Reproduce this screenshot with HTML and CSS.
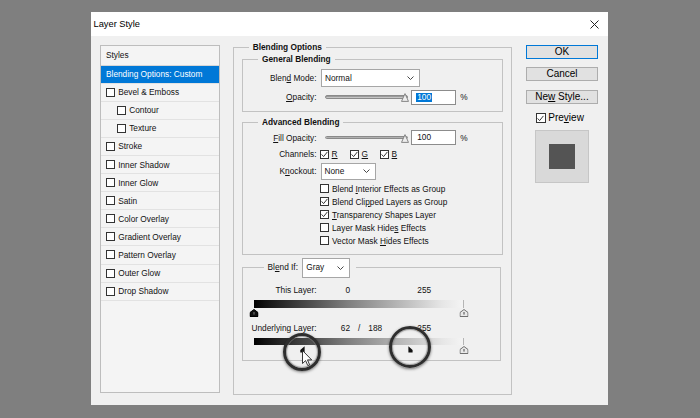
FILE: index.html
```html
<!DOCTYPE html>
<html>
<head>
<meta charset="utf-8">
<title>Layer Style</title>
<link rel="stylesheet" href="styles.css">
</head>
<body>
<div class="dialog">
  <div class="titlebar">
    <span class="title">Layer Style</span>
    <svg class="close" viewBox="0 0 9 9"><path d="M0.5 0.5L8.5 8.5M8.5 0.5L0.5 8.5" stroke="#222" stroke-width="1" fill="none"/></svg>
  </div>
  <div class="content">
    <div class="styles-panel">
      <div class="sp-header">Styles</div>
      <div class="sp-row sel">Blending Options: Custom</div>
      <div class="sp-row"><span class="cb"></span>Bevel &amp; Emboss</div>
      <div class="sp-row nested"><span class="cb"></span>Contour</div>
      <div class="sp-row nested"><span class="cb"></span>Texture</div>
      <div class="sp-row"><span class="cb"></span>Stroke</div>
      <div class="sp-row"><span class="cb"></span>Inner Shadow</div>
      <div class="sp-row"><span class="cb"></span>Inner Glow</div>
      <div class="sp-row"><span class="cb"></span>Satin</div>
      <div class="sp-row"><span class="cb"></span>Color Overlay</div>
      <div class="sp-row"><span class="cb"></span>Gradient Overlay</div>
      <div class="sp-row"><span class="cb"></span>Pattern Overlay</div>
      <div class="sp-row"><span class="cb"></span>Outer Glow</div>
      <div class="sp-row"><span class="cb"></span>Drop Shadow</div>
    </div>

    <fieldset class="grp main">
      <legend class="lg-main">Blending Options</legend>

      <fieldset class="grp sub">
        <legend>General Blending</legend>
        <div class="form">
          <span class="lbl">Blen<u>d</u> Mode:</span>
          <div class="select sel-mode"><span>Normal</span><svg class="chev" viewBox="0 0 7 4"><path d="M0.5 0.5L3.5 3.5L6.5 0.5" fill="none" stroke="#333" stroke-width="0.9"/></svg></div>
          <span class="lbl"><u>O</u>pacity:</span>
          <div class="slider-row">
            <div class="slider"><div class="track"></div><svg class="sthumb" viewBox="0 0 8 9"><path d="M4 0.6L7.5 8.4H0.5Z" fill="#ededed" stroke="#7a7a7a" stroke-width="0.9" stroke-linejoin="round"/></svg></div>
            <div class="num"><span class="hl">100</span></div>
            <span class="pct">%</span>
          </div>
        </div>
      </fieldset>

      <fieldset class="grp sub advanced">
        <legend>Advanced Blending</legend>
        <div class="form form-adv">
          <span class="lbl"><u>F</u>ill Opacity:</span>
          <div class="slider-row">
            <div class="slider"><div class="track"></div><svg class="sthumb" viewBox="0 0 8 9"><path d="M4 0.6L7.5 8.4H0.5Z" fill="#ededed" stroke="#7a7a7a" stroke-width="0.9" stroke-linejoin="round"/></svg></div>
            <div class="num"><span>100</span></div>
            <span class="pct">%</span>
          </div>
          <span class="lbl">Channels:</span>
          <div class="channels">
            <span class="ch"><span class="cb"><svg viewBox="0 0 7 7"><path d="M0.6 3.4L2.6 5.6L6.4 0.9" fill="none" stroke="#222" stroke-width="0.9"/></svg></span><u>R</u></span>
            <span class="ch"><span class="cb"><svg viewBox="0 0 7 7"><path d="M0.6 3.4L2.6 5.6L6.4 0.9" fill="none" stroke="#222" stroke-width="0.9"/></svg></span><u>G</u></span>
            <span class="ch"><span class="cb"><svg viewBox="0 0 7 7"><path d="M0.6 3.4L2.6 5.6L6.4 0.9" fill="none" stroke="#222" stroke-width="0.9"/></svg></span><u>B</u></span>
          </div>
          <span class="lbl">K<u>n</u>ockout:</span>
          <div class="select sel-ko"><span>None</span><svg class="chev" viewBox="0 0 7 4"><path d="M0.5 0.5L3.5 3.5L6.5 0.5" fill="none" stroke="#333" stroke-width="0.9"/></svg></div>
          <div class="checks">
            <div class="ck"><span class="cb"></span><span class="t">Blend <u>I</u>nterior Effects as Group</span></div>
            <div class="ck"><span class="cb"><svg viewBox="0 0 7 7"><path d="M0.6 3.4L2.6 5.6L6.4 0.9" fill="none" stroke="#222" stroke-width="0.9"/></svg></span><span class="t">Blend Cli<u>p</u>ped Layers as Group</span></div>
            <div class="ck"><span class="cb"><svg viewBox="0 0 7 7"><path d="M0.6 3.4L2.6 5.6L6.4 0.9" fill="none" stroke="#222" stroke-width="0.9"/></svg></span><span class="t"><u>T</u>ransparency Shapes Layer</span></div>
            <div class="ck"><span class="cb"></span><span class="t">Layer Mask Hide<u>s</u> Effects</span></div>
            <div class="ck"><span class="cb"></span><span class="t">Vector Mask <u>H</u>ides Effects</span></div>
          </div>
        </div>
      </fieldset>

      <fieldset class="grp blendif">
        <legend>
          <div class="bi-legend">
            <span>Bl<u>e</u>nd If:</span>
            <div class="select sel-if"><span>Gray</span><svg class="chev" viewBox="0 0 7 4"><path d="M0.5 0.5L3.5 3.5L6.5 0.5" fill="none" stroke="#333" stroke-width="0.9"/></svg></div>
          </div>
        </legend>
        <div class="bi-body">
          <div class="vals"><span class="l">This Layer:</span><span class="v1">0</span><span class="sl"></span><span class="v2"></span><span>255</span></div>
          <div class="gtrack first">
            <div class="gbar"></div>
            <div class="thumbs">
              <svg class="gthumb" style="left:0%" viewBox="0 0 9 8"><path d="M4.5 0.5L8.5 3.5V7.5H0.5V3.5Z" fill="#111" stroke="#000" stroke-linejoin="round"/><path d="M4.5 3v2.6" stroke="#888" stroke-width="0.9"/></svg>
              <svg class="gthumb" style="left:100%" viewBox="0 0 9 8"><path d="M4.5 0.5L8.5 3.5V7.5H0.5V3.5Z" fill="#e9e9e9" stroke="#707070" stroke-linejoin="round"/><path d="M4.5 3v2.6" stroke="#333" stroke-width="0.9"/></svg>
            </div>
          </div>
          <div class="vals second"><span class="l">Underlying Layer:</span><span class="v1">62</span><span class="sl">/</span><span class="v2">188</span><span>255</span></div>
          <div class="gtrack second">
            <div class="gbar bar2"></div>
            <div class="thumbs">
              <svg class="gthumb" style="left:100%" viewBox="0 0 9 8"><path d="M4.5 0.5L8.5 3.5V7.5H0.5V3.5Z" fill="#e9e9e9" stroke="#707070" stroke-linejoin="round"/><path d="M4.5 3v2.6" stroke="#333" stroke-width="0.9"/></svg>
            </div>
            <svg class="split split1" viewBox="0 0 5 7"><path d="M4.6 0.3V6.6H0.3V4Z" fill="#111"/></svg>
            <svg class="split split2" viewBox="0 0 5 7"><path d="M0.4 0.3V6.6H4.6V4Z" fill="#111"/></svg>
            <div class="ring ring1"></div>
            <div class="ring ring2"></div>
            <svg class="cursor" viewBox="0 0 11 17"><path d="M0.5 0.5V13.5L3.6 10.6L5.8 15.6L7.6 14.8L5.5 9.9H9.7Z" fill="#fff" stroke="#222" stroke-width="0.9" stroke-linejoin="round"/></svg>
          </div>
        </div>
      </fieldset>
    </fieldset>

    <div class="right">
      <div class="btn ok"><span>OK</span></div>
      <div class="btn"><span>Cancel</span></div>
      <div class="btn"><span>Ne<u>w</u> Style...</span></div>
      <div class="preview"><span class="cb"><svg viewBox="0 0 7 7"><path d="M0.6 3.4L2.6 5.6L6.4 0.9" fill="none" stroke="#222" stroke-width="0.9"/></svg></span><span class="t">Pre<u>v</u>iew</span></div>
      <div class="swatch"><div class="swatch-inner"></div></div>
    </div>
  </div>
</div>
</body>
</html>
```
FILE: styles.css
```css
* { box-sizing: border-box; }
html, body { margin: 0; }
body {
  width: 700px;
  height: 418px;
  overflow: hidden;
  background: #7f7f7f;
  padding: 12px 0 0 91px;
  font-family: "Liberation Sans", Arial, sans-serif;
  font-size: 8.3px;
  line-height: 10px;
  color: #111;
}
u { text-underline-offset: 1px; }
.t { white-space: nowrap; }

.dialog {
  width: 517px;
  height: 393px;
  background: #f0f0f0;
  display: flex;
  flex-direction: column;
}
.titlebar {
  height: 24px;
  flex: none;
  background: #fff;
  display: flex;
  align-items: center;
  justify-content: space-between;
  padding: 0 9px 0 2.5px;
}
.title { font-size: 9.3px; color: #000; }
.close { width: 9px; height: 9px; display: block; }

.content {
  flex: 1;
  display: flex;
  align-items: flex-start;
  padding: 8.5px 0 0 9px;
}

/* styles list */
.styles-panel {
  width: 120px;
  height: 348px;
  flex: none;
  border: 1px solid #bdbdbd;
  background: #f4f4f4;
}
.sp-header {
  height: 20px;
  border-bottom: 1px solid #d6d6d6;
  padding-left: 5px;
  display: flex;
  align-items: center;
}
.sp-row {
  height: 18.1px;
  border-bottom: 1px solid #e2e2e2;
  display: flex;
  align-items: center;
  padding-left: 4.5px;
  gap: 3.7px;
  white-space: nowrap;
}
.sp-row.sel { background: #0078d7; color: #fff; padding-left: 5px; }
.sp-row.nested { padding-left: 15.5px; }

.cb {
  width: 9px;
  height: 9px;
  border: 1px solid #333;
  background: #fff;
  flex: none;
  display: flex;
  align-items: center;
  justify-content: center;
}
.cb svg { display: block; width: 7px; height: 7px; }

/* group boxes */
.grp {
  margin: 0;
  padding: 0;
  border: 1px solid #c2c2c2;
  min-width: 0;
}
.grp > legend {
  padding: 0 4px;
  line-height: 11px;
  font-weight: bold;
}
.main {
  width: 279px;
  height: 353.5px;
  margin: -3px 0 0 13px;
  padding: 0 8px;
  flex: none;
}
.main > legend.lg-main { margin-left: 6.7px; }
.sub { margin-top: 1px; }
.sub > legend { margin-left: 15px; }
.advanced { margin-top: 5px; }

.form {
  display: grid;
  grid-template-columns: 73.5px auto;
  column-gap: 4.5px;
  row-gap: 3px;
  align-items: center;
  justify-items: start;
  padding: 4px 0 6px;
}
.form-adv { row-gap: 2.5px; padding: 2.5px 0 6.5px; }
.lbl { justify-self: end; white-space: nowrap; }

.select {
  display: flex;
  align-items: center;
  justify-content: space-between;
  background: #fff;
  border: 1px solid #a6a6a6;
  padding: 0 4.5px 0 3px;
}
.sel-mode { width: 98.5px; height: 18px; }
.sel-ko { width: 55px; height: 16.5px; margin-left: -0.5px; }
.sel-if { width: 48px; height: 20px; padding-left: 3px; padding-right: 5px; }
.chev { width: 7px; height: 4px; display: block; }

.slider-row { display: flex; align-items: center; height: 15px; }
.slider {
  position: relative;
  width: 86.5px;
  height: 15px;
  padding-left: 3.5px;
  display: flex;
  align-items: center;
}
.track {
  flex: 1;
  height: 3.5px;
  border-radius: 2px;
  background: linear-gradient(#858585, #b9b9b9 60%, #d6d6d6);
  border: 0.5px solid #8a8a8a;
}
.sthumb {
  position: absolute;
  left: 80.2px;
  top: 3.6px;
  width: 8px;
  height: 9px;
}
.num {
  width: 45px;
  height: 15px;
  margin-left: 3.7px;
  border: 1px solid #8c8c8c;
  background: #fff;
  padding-left: 4px;
  display: flex;
  align-items: center;
}
.num span { padding: 0 1px; line-height: 9px; }
.num .hl { background: #0078d7; color: #fff; }
.pct { margin-left: 4px; }

.channels { display: flex; height: 13px; align-items: center; margin-left: -1px; }
.ch { width: 30px; display: flex; align-items: center; gap: 2.6px; }

.checks {
  grid-column: 2;
  display: flex;
  flex-direction: column;
  margin-left: -1px;
}
.ck {
  height: 13px;
  display: flex;
  align-items: center;
  gap: 3px;
  white-space: nowrap;
}

/* blend if */
.blendif { margin: 3.3px 2px 0 0; }
.blendif > legend {
  margin-left: 20.5px;
  padding: 0 5.7px 0 4px;
  font-weight: normal;
}
.bi-legend { display: flex; align-items: center; gap: 4.3px; height: 20px; }
.bi-body { padding: 7.7px 0 6px; }
.vals { display: flex; height: 10px; align-items: center; white-space: nowrap; }
.vals.second { margin-top: 6px; }
.vals .l { width: 73.5px; text-align: right; }
.vals .v1 { width: 33.5px; text-align: right; }
.vals .sl { width: 18.3px; text-align: center; }
.vals .v2 { width: 49px; }

.gtrack {
  position: relative;
  margin-left: 10.5px;
  width: 210.3px;
}
.gtrack.first { margin-top: 4.3px; }
.gtrack.second { margin-top: 5px; }
.gbar {
  height: 8px;
  background: linear-gradient(to right, #000 0%, #111 5%, #7f7f7f 45%, #e6e6e6 90%, #f4f4f4 100%);
  border-right: 1px solid #b5b5b5;
}
.gbar.bar2 { height: 7px; }
.thumbs { position: relative; height: 8px; margin-top: 1px; }
.gthumb {
  position: absolute;
  top: 0;
  width: 9px;
  height: 8px;
  transform: translateX(-50%);
}

.split { position: absolute; width: 5px; height: 7px; }
.split1 { left: 46.5px; top: 8.4px; }
.split2 { left: 154px; top: 8.4px; }

.ring {
  position: absolute;
  border-radius: 50%;
  border: 3px solid #2e2e2e;
  box-shadow: 0 1px 3px rgba(0, 0, 0, 0.55), inset 0 0 0 1px rgba(140, 140, 140, 0.55), inset 0 0 3px rgba(0, 0, 0, 0.35);
}
.ring1 { left: 29.7px; top: -4.3px; width: 38px; height: 38px; }
.ring2 { left: 135px; top: -11.3px; width: 42px; height: 42px; }
.cursor { position: absolute; left: 48.2px; top: 12.7px; width: 11px; height: 17px; }

/* right column */
.right {
  width: 72.6px;
  margin-left: 13.7px;
  flex: none;
  display: flex;
  flex-direction: column;
  align-items: center;
  font-size: 10px;
  line-height: 12px;
  color: #000;
}
.btn {
  width: 100%;
  height: 14px;
  border: 1px solid #adadad;
  background: #e1e1e1;
  display: flex;
  align-items: center;
  justify-content: center;
  margin-bottom: 8.6px;
  white-space: nowrap;
}
.btn.ok { border-color: #0078d7; }
.preview {
  align-self: flex-start;
  margin-left: 10.3px;
  display: flex;
  align-items: center;
  gap: 2.3px;
  height: 12px;
}
.preview .cb { width: 10px; height: 10px; }
.swatch {
  width: 54px;
  height: 53px;
  margin-top: 5.5px;
  background: #d9d9d9;
  border: 1px solid #c6c6c6;
  display: flex;
  align-items: center;
  justify-content: center;
}
.swatch-inner { width: 26px; height: 25px; background: #545454; }
```
